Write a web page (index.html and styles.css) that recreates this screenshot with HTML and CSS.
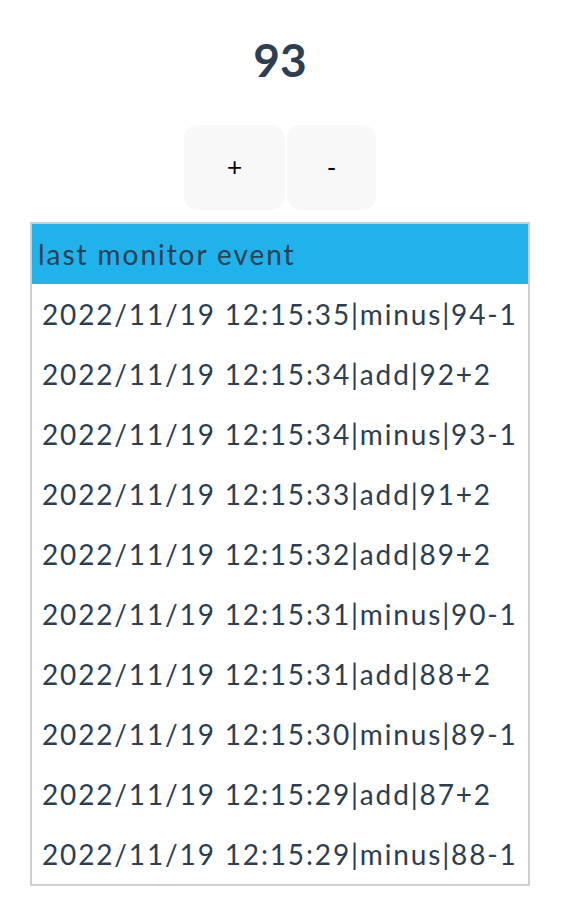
FILE: index.html
```html
<!DOCTYPE html>
<html>
<head>
<meta charset="utf-8">
<link rel="stylesheet" href="styles.css">
</head>
<body>
<div class="app">
  <h1 class="count">93</h1>
  <div class="buttons">
    <button class="btn btn-add">+</button>
    <button class="btn btn-minus">-</button>
  </div>
  <div class="log">
    <div class="log-head">last monitor event</div>
    <div class="log-row">2022/11/19 12:15:35|minus|94-1</div>
    <div class="log-row">2022/11/19 12:15:34|add|92+2</div>
    <div class="log-row">2022/11/19 12:15:34|minus|93-1</div>
    <div class="log-row">2022/11/19 12:15:33|add|91+2</div>
    <div class="log-row">2022/11/19 12:15:32|add|89+2</div>
    <div class="log-row">2022/11/19 12:15:31|minus|90-1</div>
    <div class="log-row">2022/11/19 12:15:31|add|88+2</div>
    <div class="log-row">2022/11/19 12:15:30|minus|89-1</div>
    <div class="log-row">2022/11/19 12:15:29|add|87+2</div>
    <div class="log-row">2022/11/19 12:15:29|minus|88-1</div>
  </div>
</div>
</body>
</html>
```
FILE: styles.css
```css
html, body {
  margin: 0;
  padding: 0;
  background: #fff;
}
.app {
  width: 560px;
  font-family: Lato, "Noto Sans", sans-serif;
  color: #2c3e50;
  display: flex;
  flex-direction: column;
  align-items: center;
}
.count {
  margin: 28px 0 0;
  font-size: 46px;
  font-weight: 700;
  line-height: 64px;
}
.buttons {
  display: flex;
  gap: 2px;
  margin-top: 33px;
}
.btn {
  border: none;
  background: #f8f8f8;
  border-radius: 14px;
  height: 85px;
  font-family: "Liberation Sans", sans-serif;
  font-size: 26px;
  color: #000;
  padding: 0;
}
.btn-add { width: 101px; }
.btn-minus { width: 89px; }
.log {
  margin-top: 12px;
  width: 496px;
  border: 2px solid #cfcfcf;
  display: flex;
  flex-direction: column;
}
.log-head {
  background: #1fb2eb;
  height: 60px;
  line-height: 60px;
  padding-left: 6px;
  font-size: 28px;
  letter-spacing: 1.95px;
}
.log-row {
  height: 60px;
  line-height: 60px;
  padding-left: 10px;
  font-size: 28px;
  letter-spacing: 1.85px;
  white-space: nowrap;
}
```
